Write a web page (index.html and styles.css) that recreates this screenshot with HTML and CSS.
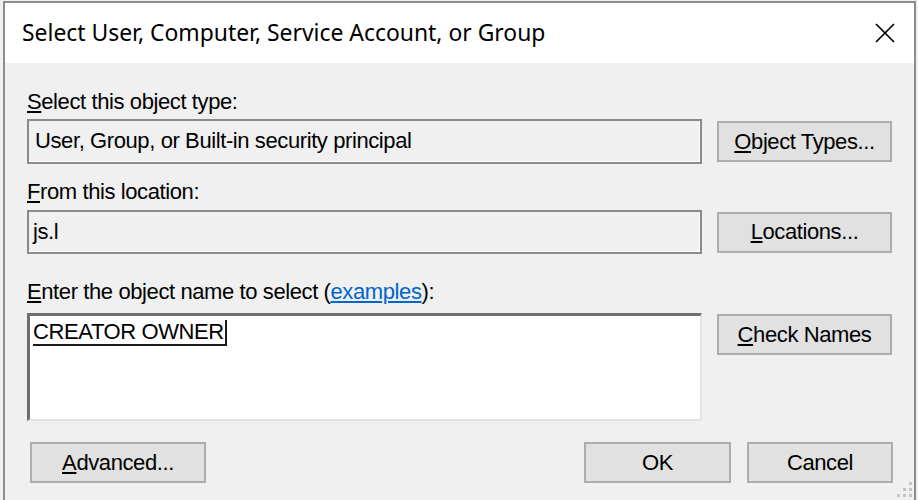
FILE: index.html
```html
<!DOCTYPE html>
<html lang="en">
<head>
  <meta charset="UTF-8" />
  <title>Select User, Computer, Service Account, or Group</title>
  <link rel="stylesheet" href="styles.css">
</head>

<body>
  <div class="window">
    <div class="titlebar">
      <span class="title">Select User, Computer, Service Account, or Group</span>
      <svg class="close" width="20" height="20" viewBox="0 0 20 20">
        <path d="M1 1 L19 19 M19 1 L1 19" stroke="#000" stroke-width="1.7" fill="none" />
      </svg>
    </div>

    <div class="content">
      <div class="label"><u>S</u>elect this object type:</div>
      <div class="row row-1">
        <div class="box readonly">User, Group, or Built-in security principal</div>
        <button class="btn"><u>O</u>bject Types...</button>
      </div>

      <div class="label label-2"><u>F</u>rom this location:</div>
      <div class="row row-2">
        <div class="box readonly">js.l</div>
        <button class="btn"><u>L</u>ocations...</button>
      </div>

      <div class="label label-3"><u>E</u>nter the object name to select (<a href="#">examples</a>):</div>
      <div class="row row-3">
        <div class="box names"><span class="name">CREATOR OWNER</span></div>
        <button class="btn"><u>C</u>heck Names</button>
      </div>

      <div class="actions">
        <button class="btn btn-advanced"><u>A</u>dvanced...</button>
        <div class="spacer"></div>
        <button class="btn btn-ok">OK</button>
        <button class="btn btn-cancel">Cancel</button>
      </div>
    </div>

    <svg class="grip" width="20" height="20" viewBox="0 0 20 20">
      <rect x="14" y="2" width="3" height="3" fill="#c4c4c4" />
      <rect x="8" y="8" width="3" height="3" fill="#c4c4c4" />
      <rect x="14" y="8" width="3" height="3" fill="#c4c4c4" />
      <rect x="2" y="14" width="3" height="3" fill="#c4c4c4" />
      <rect x="8" y="14" width="3" height="3" fill="#c4c4c4" />
      <rect x="14" y="14" width="3" height="3" fill="#c4c4c4" />
    </svg>
  </div>
</body>
</html>
```

FILE: styles.css
```css
html, body {
  margin: 0;
  padding: 0;
  height: 100vh;
  overflow: hidden;
  background: #f0f0f0;
  font-family: "Liberation Sans", Arial, sans-serif;
  font-size: 22px;
  letter-spacing: -0.4px;
  color: #000;
}

.window {
  position: relative;
  box-sizing: border-box;
  width: 913px;
  height: 520px;
  margin: 1px 0 0 3px;
  border: 2px solid #8c8c8c;
  border-bottom: none;
  background: #f0f0f0;
}

.titlebar {
  height: 60px;
  background: #fff;
  display: flex;
  align-items: center;
  justify-content: space-between;
  padding: 0 19px 0 17px;
}

.title {
  font-family: "Noto Sans", sans-serif;
  font-size: 22.9px;
  letter-spacing: 0;
  padding-bottom: 1px;
}

.content {
  padding: 27px 0 0 22px;
}

.label {
  height: 24px;
  line-height: 24px;
  white-space: nowrap;
}

.label a {
  color: #0066cc;
}

.label-2 {
  margin-top: 16px;
}

.label-3 {
  margin-top: 26px;
}

.row {
  display: flex;
  align-items: center;
  gap: 15px;
}

.row-1 {
  margin-top: 5px;
}

.row-2 {
  margin-top: 6px;
}

.row-3 {
  margin-top: 9px;
  align-items: flex-start;
}

.box {
  box-sizing: border-box;
  width: 675px;
  white-space: nowrap;
}

.readonly {
  height: 45px;
  line-height: 39px;
  padding-left: 6px;
  border: 2px solid #8a8a8a;
  box-shadow: inset -1px -1px 0 #fff;
}

.row-2 .readonly {
  height: 44px;
  padding-left: 4px;
}

.names {
  height: 108px;
  background: #fff;
  border-style: solid;
  border-width: 3px 2px 2px 3px;
  border-color: #6e6e6e #e3e3e3 #e3e3e3 #6e6e6e;
  padding: 3px 0 0 3px;
}

.name {
  display: inline-block;
  line-height: 24px;
  padding-right: 1px;
  border-right: 2px solid #1a1a1a;
  border-bottom: 2px solid #1a1a1a;
}

.btn {
  box-sizing: border-box;
  width: 175px;
  height: 41px;
  padding: 0;
  background: #e1e1e1;
  border: 2px solid #adadad;
  font-family: inherit;
  font-size: 22px;
  letter-spacing: -0.4px;
  color: #000;
}

.row-3 .btn {
  margin-top: 1px;
}

.actions {
  display: flex;
  align-items: center;
  margin-top: 21px;
  padding-left: 3px;
}

.spacer {
  flex: 1;
}

.btn-advanced {
  width: 176px;
}

.btn-ok {
  width: 147px;
}

.btn-cancel {
  width: 146px;
  margin: 0 21px 0 16px;
}

.grip {
  position: absolute;
  left: 890px;
  top: 477px;
}
```
